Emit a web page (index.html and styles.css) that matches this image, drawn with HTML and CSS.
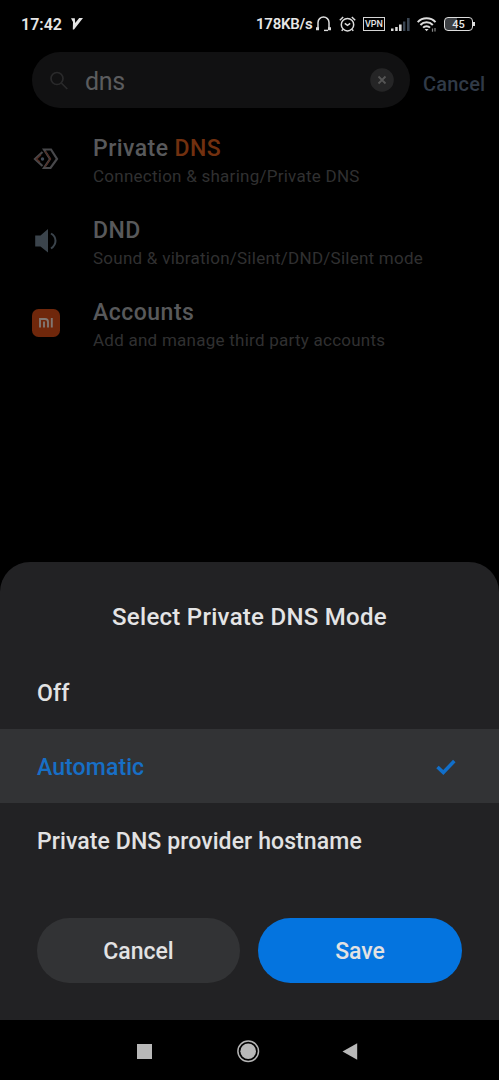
FILE: index.html
```html
<!DOCTYPE html>
<html lang="en">
<head>
<meta charset="utf-8">
<title>Private DNS</title>
<link rel="stylesheet" href="styles.css">
</head>
<body>
<div class="phone">
  <header class="status">
    <div class="status-left">
      <span class="clock">17:42</span>
      <svg class="v-icon" width="12" height="12" viewBox="0 0 12 12"><path d="M0 0.3H3.8L4.2 5L8.2 0H12L3 11.6H1.8L2 4Z" fill="#e6e6e6"/></svg>
    </div>
    <div class="status-right">
      <span class="speed">178KB/s</span>
      <svg class="headset" width="17" height="16" viewBox="0 0 17 16" fill="none" stroke="#ddd" stroke-width="1.5"><path d="M3 13.8V6.5A5.5 5.5 0 0 1 14 6.5V13.8"/><path d="M1 12.8H4M13 12.8H16" stroke-width="3"/><path d="M9 14.4H13" stroke-width="1.4"/></svg>
      <svg class="alarm" width="17" height="16" viewBox="0 0 17 16" fill="none" stroke="#ddd" stroke-width="1.5"><circle cx="8.5" cy="8.7" r="6.2"/><path d="M5.8 7.3L8.5 9.4L11.2 7.3M.8 4.2L4.2 1M16.2 4.2L12.8 1M3.8 13.3L2.8 14.8M13.2 13.3L14.2 14.8"/></svg>
      <span class="vpn">VPN</span>
      <svg class="signal" width="19" height="13" viewBox="0 0 19 13"><path d="M0 10.5H2.5V13H0ZM4.2 9H6.7V13H4.2ZM8 6.5H10.6V13H8Z" fill="#ddd"/><path d="M12 3.5H14.4V13H12ZM16 0H18.6V13H16Z" fill="#3a4552"/></svg>
      <svg class="wifi" width="20" height="16" viewBox="0 0 20 16" fill="none" stroke="#ddd" stroke-width="2"><path d="M.7 5.1C5.5.1 13.7.1 18.5 5.1M3.4 8C6.8 4.4 12.4 4.4 15.8 8M6.1 10.7C8 8.6 11.1 8.6 13 10.7"/><path d="M7.6 12L9.6 14.3L11.6 12Z" fill="#ddd" stroke="none"/><path d="M15.5 11.4V14.8M18 11V14.4" stroke="#888" stroke-width="1.2"/></svg>
      <span class="battery"><span class="cell">45</span><i class="tip"></i></span>
    </div>
  </header>

  <div class="search-row">
    <div class="search">
      <svg class="lens" width="18" height="19" viewBox="0 0 18 19" fill="none" stroke="#2a2a2b" stroke-width="1.7"><circle cx="7" cy="7.5" r="6"/><path d="M11.3 12L17.3 18"/></svg>
      <span class="query">dns</span>
      <svg class="clear" width="24" height="24" viewBox="0 0 24 24"><circle cx="12" cy="12" r="11.8" fill="#252526"/><path d="M8.5 8.5L15.5 15.5M15.5 8.5L8.5 15.5" stroke="#555" stroke-width="1.8"/></svg>
    </div>
    <span class="search-cancel">Cancel</span>
  </div>

  <main class="results">
    <div class="result">
      <svg class="result-icon" width="28" height="28" viewBox="0 0 28 28" fill="none" stroke-width="2"><path d="M10.5 7L3 14L10.5 21" stroke="#48484b" stroke-width="2.2"/><path d="M9 10L4.5 14L8 17" stroke="#542b20" stroke-width="1.3"/><path d="M12 4.5H19L25 14L18.5 23H12L18 14Z" stroke="#48484b" stroke-width="2.2"/><path d="M13 6L18.5 13.8L13 22" stroke="#542b20" stroke-width="1.1"/><circle cx="10.5" cy="14" r="1.7" fill="#414b58"/></svg>
      <div><div class="name private">Private <span class="hit">DNS</span></div><div class="path">Connection &amp; sharing/Private DNS</div></div>
    </div>
    <div class="result">
      <svg class="result-icon" width="28" height="28" viewBox="0 0 28 28"><path d="M3.2 8.5H8.5L16 2V25.5L8.5 19.5H3.2Z" fill="#3b444c"/><path d="M19 6.5C25 10 25 17.5 19 21.5" fill="none" stroke="#3b444c" stroke-width="2"/></svg>
      <div><div class="name">DND</div><div class="path">Sound &amp; vibration/Silent/DND/Silent mode</div></div>
    </div>
    <div class="result">
      <svg class="result-icon" width="28" height="28" viewBox="0 0 28 28"><rect width="28" height="28" rx="6.5" fill="#6f270b"/><path d="M8 18.5V10H13Q16 10 16 13V18.5M12 12.5V18.5M19.8 9V18.5" fill="none" stroke="#817772" stroke-width="1.9"/></svg>
      <div><div class="name">Accounts</div><div class="path">Add and manage third party accounts</div></div>
    </div>
  </main>

  <section class="sheet">
    <h1 class="sheet-title">Select Private DNS Mode</h1>
    <div class="option"><span>Off</span></div>
    <div class="option selected"><span>Automatic</span>
      <svg class="check" width="20" height="17" viewBox="0 0 20 17" fill="none" stroke="#116fca" stroke-width="3.5"><path d="M1.5 8L7.3 13.5L18.3 2"/></svg>
    </div>
    <div class="option"><span>Private DNS provider hostname</span></div>
    <div class="actions"><button class="btn">Cancel</button><button class="btn save">Save</button></div>
  </section>

  <nav class="nav">
    <svg width="499" height="60" viewBox="0 0 499 60"><rect x="137" y="24" width="15" height="15" fill="#b8b8b8"/><circle cx="248.2" cy="31.2" r="10.3" fill="none" stroke="#b4b4b4" stroke-width="1.5"/><circle cx="248.2" cy="31.2" r="7.8" fill="#b8b8b8"/><path d="M357.2 23.3V39.8L342.5 31.5Z" fill="#b8b8b8"/></svg>
  </nav>
</div>
</body>
</html>
```
FILE: styles.css
```css
* { box-sizing: border-box; }
body { margin: 0; background: #000; font-family: Roboto, "Liberation Sans", sans-serif; }
.phone { width: 499px; height: 1080px; display: flex; flex-direction: column; background: #000; overflow: hidden; }
svg { display: block; flex: none; }

.status { height: 52px; padding: 0 24px 4px 21px; display: flex; align-items: center; justify-content: space-between; color: #e6e6e6; }
.status-left, .status-right { display: flex; align-items: center; }
.clock { font-size: 16px; font-weight: 600; width: 41px; }
.v-icon { margin-left: 9px; margin-top: -1px; }
.speed { font-size: 15px; font-weight: 600; letter-spacing: -0.25px; width: 57px; white-space: nowrap; }
.headset { margin-left: 2px; }
.alarm { margin-left: 7px; }
.vpn { width: 22px; height: 14px; margin-left: 7px; border: 1px solid #d5d5d5; font-size: 9px; line-height: 12px; font-weight: 500; text-align: center; }
.signal { margin-left: 6px; }
.wifi { margin-left: 7px; margin-top: 1px; }
.battery { display: flex; align-items: center; margin-left: 7px; }
.cell { width: 29px; height: 14px; border: 1.5px solid #ddd; border-radius: 4px; background: linear-gradient(90deg, #3c3f43 45%, #000 45%); font-size: 11px; font-weight: 500; line-height: 13px; text-align: center; }
.tip { width: 2px; height: 4px; background: #ddd; }

.search-row { display: flex; padding-left: 32px; align-items: center; height: 56px; }
.search { width: 378px; height: 56px; border-radius: 28px; background: #111112; display: flex; align-items: center; padding: 0 16px 0 18px; }
.query { font-size: 25px; color: #5b5c5e; margin-left: 17px; flex: 1; padding-top: 2px; letter-spacing: -0.3px; }
.search-cancel { margin-left: 13px; padding-top: 7px; font-size: 20px; font-weight: 500; letter-spacing: 0.2px; color: #303a47; }

.results { height: 454px; padding-top: 24px; }
.result { height: 82px; padding-left: 32px; display: flex; }
.result-icon { margin: 13px 33px 0 0; }
.name { padding-top: 1px; font-size: 23px; line-height: 31px; font-weight: 500; letter-spacing: 0.5px; color: #58595b; white-space: nowrap; }
.private { letter-spacing: 0.45px; }
.hit { color: #72300f; }
.path { font-size: 17px; line-height: 25px; letter-spacing: 0.25px; color: #303031; white-space: nowrap; }

.sheet { height: 458px; background: #222224; border-radius: 30px 30px 0 0; display: flex; flex-direction: column; }
.sheet-title { margin: 0; height: 93px; padding-top: 17px; line-height: 77px; font-size: 24px; font-weight: 500; letter-spacing: 0.28px; color: #e4e4e5; text-align: center; }
.option { height: 74px; padding: 2px 43px 0 37px; display: flex; align-items: center; justify-content: space-between; color: #e2e2e3; font-size: 23px; font-weight: 500; letter-spacing: 0.1px; }
.option.selected { background: #323335; color: #176fc6; }
.actions { display: flex; gap: 18px; padding: 41px 37px 0; }
.btn { width: 203px; height: 65px; padding: 2px 0 0; border: 0; border-radius: 33px; background: #323335; color: #e2e2e3; font: 500 23px Roboto, "Liberation Sans", sans-serif; }
.btn.save { width: 204px; background: #0474df; }
.nav { height: 60px; }
```
